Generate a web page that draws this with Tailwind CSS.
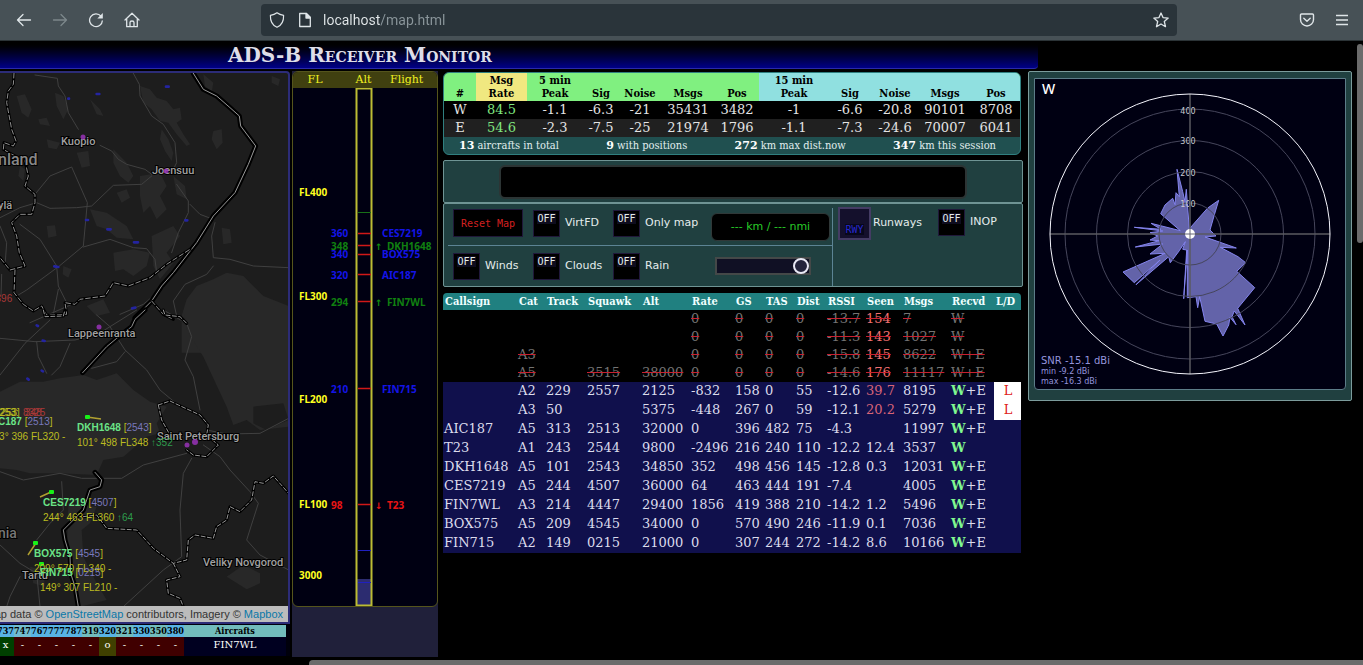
<!DOCTYPE html>
<html lang="en">
<head>
<meta charset="utf-8">
<title>ADS-B Receiver Monitor</title>
<script src="https://cdn.jsdelivr.net/npm/@tailwindcss/browser@4"></script>
</head>
<body class="bg-black text-white overflow-hidden font-['DejaVu_Serif',serif]">

<!-- Browser toolbar -->
<header class="relative flex items-center h-[41px] bg-[#475156] border-b border-[#2b3336] text-[#dfe5e8] font-['Roboto',sans-serif]">
  <nav class="flex items-center w-[261px] pl-4 gap-5 shrink-0">
    <button aria-label="Back" class="size-4"><svg viewBox="0 0 16 16" class="size-4" fill="none" stroke="currentColor" stroke-width="1.3" stroke-linecap="round" stroke-linejoin="round"><path d="M14.500 8H1.500M7 2.500L1.500 8L7 13.500"/></svg></button>
    <button aria-label="Forward" class="size-4 text-[#7d878b]"><svg viewBox="0 0 16 16" class="size-4" fill="none" stroke="currentColor" stroke-width="1.300" stroke-linecap="round" stroke-linejoin="round"><path d="M1.500 8H14.500M9 2.500L14.500 8L9 13.500"/></svg></button>
    <button aria-label="Reload" class="size-4"><svg viewBox="0 0 16 16" class="size-4" fill="none" stroke="currentColor" stroke-width="1.300"><path d="M13 4.200A6.400 6.400 0 1 0 14.400 8.500"/><path d="M14.800 1V6.500H9.300Z" fill="currentColor" stroke="none"/></svg></button>
    <button aria-label="Home" class="size-4"><svg viewBox="0 0 16 16" class="size-4" fill="none" stroke="currentColor" stroke-width="1.300" stroke-linejoin="round" stroke-linecap="round"><path d="M1 8L8 1.300L15 8M2.700 7V14.700H13.300V7M6 14.500V10.500Q6 9 8 9T10 10.500V14.500"/></svg></button>
  </nav>
  <div class="flex flex-1 items-center h-8 px-2 rounded bg-[#2a343a]">
    <svg viewBox="0 0 16 16" class="size-4 shrink-0" fill="none" stroke="currentColor" stroke-width="1.200" stroke-linejoin="round"><path d="M8 .8C10 2.300 12 3 14.600 3.400C14.800 9 13 13 8 15.300C3 13 1.200 9 1.400 3.400C4 3 6 2.300 8 .8Z"/></svg>
    <svg viewBox="0 0 16 16" class="size-4 ml-3 shrink-0" fill="none" stroke="currentColor" stroke-width="1.300" stroke-linejoin="round"><path d="M2.700 1.500H9.500L13.300 5.300V14.500H2.700Z"/><path d="M9 1.500V6H13.300Z" fill="currentColor"/></svg>
    <input aria-label="Address" value="localhost/map.html" class="flex-1 ml-[10px] text-sm outline-none bg-linear-[90deg,#e3e8ea_57px,#8b969b_57px] bg-clip-text text-transparent">
    <button aria-label="Bookmark" class="size-4"><svg viewBox="0 0 16 16" class="size-4" fill="none" stroke="currentColor" stroke-width="1.300" stroke-linejoin="round"><path d="M8 1L10 5.600L15.200 6.100L11.300 9.500L12.500 14.700L8 12L3.500 14.700L4.700 9.500L.8 6.100L6 5.600Z"/></svg></button>
  </div>
  <div class="flex items-center w-[186px] pr-[14px] gap-5 justify-end shrink-0">
    <button aria-label="Pocket" class="size-4"><svg viewBox="0 0 16 16" class="size-4" fill="none" stroke="currentColor" stroke-width="1.400" stroke-linecap="round" stroke-linejoin="round"><path d="M2.500 2H13.500Q14.500 2 14.500 3V7.500A6.500 6.500 0 0 1 1.500 7.500V3Q1.500 2 2.500 2ZM4.800 6.300L8 9.300L11.200 6.300"/></svg></button>
    <button aria-label="Menu" class="size-[14px]"><svg viewBox="0 0 14 14" class="size-[14px]" stroke="currentColor" stroke-width="1.400"><path d="M1 2.500H13M1 7H13M1 11.500H13"/></svg></button>
  </div>
  <div class="absolute right-0 top-11 w-[6px] h-[199px] rounded-full bg-[#6b6b6b]"></div>
</header>

<div class="mr-[325px] mb-[2px] h-7 pl-[228px] flex items-center rounded-br border-b border-[#2a2aa8] bg-linear-to-b from-black to-[#000088]">
  <h1 class="text-xl font-bold leading-7 text-[#dedee8] [font-variant:small-caps]">ADS-B Receiver Monitor</h1>
</div>

<main class="grid grid-cols-[290px_146px_minmax(0,1fr)_324px] pr-[11px] items-start">

  <!-- Map -->
  <section>
    <div class="relative h-[553px] rounded-tr border-y-2 border-r-2 border-[#2c2c78] bg-[#1d1d1d] overflow-hidden">
      <svg viewBox="0 73 288 550" width="288" height="550" class="block font-['Roboto',sans-serif]">
        <!-- upper half, drawn at three units per pixel -->
        <g transform="translate(0 66) scale(.33333)" fill="none" stroke-linejoin="round" stroke-linecap="round">
          <g fill="#282828">
            <path d="M420 60L450 70L470 95L500 105L520 130L540 125L545 160L530 170L550 205L570 235L560 240L530 205L505 170L480 165L455 130L430 110Z"/>
            <path d="M50 90L75 85L95 130L85 155L65 140ZM165 80L190 90L205 130L190 160L170 120ZM270 100L300 130L310 150L290 145ZM115 160L140 155L150 180L120 175Z"/>
            <path d="M485 190L505 220L520 260L515 285L495 255L480 220ZM640 195L665 190L668 230L650 250L635 220ZM340 250L380 290L400 330L385 350L360 330L340 290ZM230 260L265 255L270 300L245 305Z"/>
            <path d="M420 330L480 320L500 360L480 390L500 430L470 460L450 420L430 440L420 390ZM520 330L555 360L560 400L530 385ZM270 430L320 440L380 480L400 520L350 515L320 490L290 480ZM140 480L165 478L170 510L145 515Z"/>
            <path d="M340 560L400 550L450 560L440 600L400 630L370 610L345 615ZM455 510L520 480L540 510L500 560L520 590L480 640L460 600ZM665 485L690 490L695 530L670 535ZM190 600L215 610L205 635L188 625ZM350 380L380 370L390 395L365 410Z"/>
            <path d="M545 750L560 700L590 660L640 640L680 620L730 630L790 690L866 720V860H545ZM610 25L640 50L635 80L615 60ZM815 30L840 40L835 60L815 50ZM260 720L310 700L330 740L290 750ZM60 300L75 310L70 345L55 330ZM140 220L180 230L170 250L145 245Z"/>
          </g>
          <g stroke="#404040" stroke-width="3">
            <path d="M105 27L172 37L175 60L195 90L205 140L235 190M300 238L335 255L355 280L380 295L435 310L455 325M400 22L418 55L420 90L455 150L490 175L525 230L530 290L515 320M0 455L60 425L110 410L150 427L230 425L275 420L340 358L425 355L455 330M105 385L150 330L215 303L240 360L262 410L250 540L178 600L80 672L50 690M250 543L330 520L400 545L440 548L465 580L470 620M530 355L565 405L565 440L535 500L515 560M570 415L600 445L640 460M645 470L635 510L640 575L690 580L760 600L866 605M640 600L620 625L555 655L520 705L530 750M60 475L120 520L170 600L175 660L200 710L190 748M175 670L160 745M0 480L20 530L15 600M490 665L430 715L360 745M90 770L250 700M5 625L3 690"/>
          </g>
          <path d="M580 22L610 70L650 90L690 125L718 150L722 180L767 240L745 295L705 380L640 450L590 530L520 620L485 660L455 705L405 755" stroke="#000" stroke-width="15"/>
          <path d="M580 22L610 70L650 90L690 125L718 150L722 180L767 240L745 295L705 380L640 450L590 530L520 620L485 660L455 705L405 755" stroke="#999" stroke-width="3"/>
          <path d="M42 22L40 55L25 75L20 110L35 190L48 225L40 240L12 230L10 250L30 262L75 285L85 330L75 360L105 385L105 410L95 445L60 445L35 470L50 510L58 560L75 600L30 612L0 575M45 612L42 680L70 715L100 735L125 720L140 748L200 745L195 710L225 715L240 700L315 690L340 650L385 660L450 635L500 595L570 550M455 705L490 745L520 760" stroke="#000" stroke-width="9"/>
          <path d="M42 22L40 55L25 75L20 110L35 190L48 225L40 240L12 230L10 250L30 262L75 285L85 330L75 360L105 385L105 410L95 445L60 445L35 470L50 510L58 560L75 600L30 612L0 575M45 612L42 680L70 715L100 735L125 720L140 748L200 745L195 710L225 715L240 700L315 690L340 650L385 660L450 635L500 595L570 550M455 705L490 745L520 760" stroke="#909090" stroke-width="3" stroke-dasharray="14 8"/>
          <g stroke="#2424a0" stroke-width="8"><path d="M205 98l2 0M290 84l8 0M498 62l8 0M258 462l6 0M322 490l10 0M402 529l12 0M556 463l6 0M163 601l12 2M396 727l10-2"/></g>
        </g>
        <!-- lower half -->
        <g transform="translate(0 310) scale(.33333)" fill="none" stroke-linejoin="round" stroke-linecap="round">
          <g fill="#282828">
            <path d="M0 245L60 215L130 215L180 205L250 195L290 210L350 190L400 240L450 275L500 290L470 340L480 370L440 380L370 440L310 450L290 495L180 490L90 490L50 480L0 475Z"/>
            <path d="M550 0H866V350L780 360L740 330L700 345L680 290L610 140L560 60Z"/>
            <path d="M205 580L290 590L270 640L245 660L250 740L290 820L320 870L240 890L200 760ZM680 800L730 765L780 790L780 820L740 838ZM90 770L130 780L135 830L100 820Z"/>
          </g>
          <path d="M760 290L850 280L866 330L800 360L760 340Z" fill="#1d1d1d"/>
          <g stroke="#404040" stroke-width="3">
            <path d="M0 85L105 95L225 90L290 75L410 0M290 15L330 50L375 120L440 180L480 240L540 290M0 195L75 100L150 30M110 95L115 140L140 190M210 100L180 170L155 195M275 175L350 155L375 125M490 0L560 40L575 80L555 150L580 200L600 300M620 360L680 372L780 370L866 325M0 485L70 510L180 490L245 505L365 505L430 465L560 430M575 445L550 490L540 600L545 740L490 780L370 890M610 405L660 440L690 480L750 545L775 580L740 690L780 735L866 780M185 515L190 600L150 640L110 690M0 705L60 760L110 790L120 890M60 800L30 860L20 890"/>
          </g>
          <path d="M435 0L405 28L395 50L350 85L320 110L248 188M285 487L305 510L300 530L270 540L250 600L190 660L195 690L210 740L212 790L225 830L235 890" stroke="#000" stroke-width="15"/>
          <path d="M435 0L405 28L395 50L350 85L320 110L248 188M285 487L305 510L300 530L270 540L250 600L190 660L195 690L210 740L212 790L225 830L235 890" stroke="#909090" stroke-width="3"/>
          <path d="M130 0L135 20L190 18L195 0M490 0L495 15L540 20L560 40M475 285L510 273L535 285L600 315L625 345L620 375L655 405L620 440L580 435L560 420M475 285L485 330L510 375M250 620L290 615L320 655L410 660L460 715L520 760L560 750L565 690L585 675L640 685L650 650L680 630L690 590L720 605L755 570L765 515L790 520L820 498L866 550M520 760L540 800L500 810L505 850L540 865L550 890" stroke="#000" stroke-width="9"/>
          <path d="M130 0L135 20L190 18L195 0M490 0L495 15L540 20L560 40M475 285L510 273L535 285L600 315L625 345L620 375L655 405L620 440L580 435L560 420M475 285L485 330L510 375M250 620L290 615L320 655L410 660L460 715L520 760L560 750L565 690L585 675L640 685L650 650L680 630L690 590L720 605L755 570L765 515L790 520L820 498L866 550M520 760L540 800L500 810L505 850L540 865L550 890" stroke="#989898" stroke-width="3" stroke-dasharray="12 7"/>
          <g stroke="#2424a0" stroke-width="8"><path d="M110 46l4 2M128 92l6 1M125 182l4 2M82 206l4 3"/></g>
        </g>
        <g fill="#a0a0a0" stroke="#000" stroke-width="2" paint-order="stroke" font-size="11" font-weight="500">
          <text x="61" y="145">Kuopio</text><text x="152" y="174">Joensuu</text><text x="-2" y="209">ylä</text>
          <text x="68" y="337">Lappeenranta</text><text x="157" y="440">Saint Petersburg</text>
          <text x="203" y="566">Veliky Novgorod</text><text x="22" y="579">Tartu</text>
          <text x="-2" y="165" font-size="16" fill="#888">nland</text><text x="-2" y="538" font-size="14" fill="#777">nia</text>
        </g>
        <g fill="#9932b8" fill-opacity=".85"><circle cx="83" cy="137" r="2.500"/><circle cx="166" cy="171" r="2.500"/><circle cx="99" cy="327" r="2.500"/><circle cx="195" cy="442" r="3"/><circle cx="187" cy="445" r="2.500"/></g>
        <g stroke="#b0a030" stroke-width="1.500"><path d="M87 417L101 419M51 492L40 497M36 543L28 555"/></g>
        <g fill="#18f018"><rect x="85" y="415" width="5" height="4" rx="1"/><rect x="49" y="490" width="5" height="4" rx="1"/><rect x="33" y="541" width="5" height="4" rx="1"/><rect x="39" y="562" width="5" height="4" rx="1"/></g>
        <g class="font-['Liberation_Sans',sans-serif]" font-size="10" fill="#bcbc20">
          <text x="-10" y="302" fill="#a83838">5396</text>
          <text x="-12" y="416">81253:</text><text x="-8" y="416">[1253]</text><text x="25" y="416" fill="#a83838">348</text><text x="23" y="416" fill="#a83838">8325</text>
          <text x="-12" y="425"><tspan font-weight="700" fill="#6be487">AIC187</tspan> [<tspan fill="#7878bc">2513</tspan>]</text>
          <text x="-12" y="440">313° 396 FL320 -</text>
          <text x="77" y="431"><tspan font-weight="700" fill="#6be487">DKH1648</tspan> [<tspan fill="#7878bc">2543</tspan>]</text>
          <text x="77" y="446">101° 498 FL348 <tspan fill="#2d9c4c">↑352</tspan></text>
          <text x="43" y="506"><tspan font-weight="700" fill="#6be487">CES7219</tspan> [<tspan fill="#7878bc">4507</tspan>]</text>
          <text x="43" y="521">244° 463 FL360 <tspan fill="#2d9c4c">↑64</tspan></text>
          <text x="34" y="557"><tspan font-weight="700" fill="#6be487">BOX575</tspan> [<tspan fill="#7878bc">4545</tspan>]</text>
          <text x="34" y="572">209° 570 FL340 -</text>
          <text x="40" y="576"><tspan font-weight="700" fill="#6be487">FIN715</tspan> [<tspan fill="#7878bc">0215</tspan>]</text>
          <text x="40" y="591">149° 307 FL210 -</text>
        </g>
      </svg>
      <p class="absolute bottom-0 inset-x-0 h-4 pr-[5px] flex justify-end items-center whitespace-nowrap bg-[#bcbcbc] text-[11px] leading-4 text-[#333] font-['Liberation_Sans',sans-serif]"><span>Map data © <a href="#" class="text-[#0a78a8]">OpenStreetMap</a> contributors, Imagery © <a href="#" class="text-[#0a78a8]">Mapbox</a></span></p>
    </div>
    <div class="flex justify-end overflow-hidden pr-1 pt-px bg-[#00000c]">
      <table class="w-[289px] shrink-0 table-fixed border-collapse text-center text-[10px] [&_th]:p-0 [&_td]:p-0">
        <colgroup><col span="11" class="w-[17px]"><col></colgroup>
        <thead class="text-[9px] leading-3 text-black font-['DejaVu_Serif_Condensed','DejaVu_Serif',serif]"><tr class="h-3 bg-[#72bcbc]">
          <th class="bg-[#58b4e4]">737</th><th class="bg-[#72bcd0]">747</th><th class="bg-[#58b4e4]">767</th><th class="bg-[#58b4e4]">777</th><th class="bg-[#58b4e4]">787</th><th>319</th><th class="bg-[#58b4e4]">320</th><th>321</th><th class="bg-[#58b4e4]">330</th><th>350</th><th class="bg-[#58b4e4]">380</th><th>Aircrafts</th></tr></thead>
        <tbody class="align-top leading-[15px]"><tr class="h-[19px] bg-[#400000]">
          <td class="bg-[#004000]">x</td><td>-</td><td>-</td><td>-</td><td>-</td><td>-</td><td class="bg-[#404000]">o</td><td>-</td><td>-</td><td>-</td><td>-</td><td class="bg-[#000020]">FIN7WL</td></tr></tbody>
      </table>
    </div>
  </section>

  <!-- Altitude ladder -->
  <section class="ml-[2px] -mr-[2px] h-[586px] bg-[#20203a]">
    <div class="rounded-md border border-[#55551c] bg-[#000012] overflow-hidden">
      <div class="grid grid-cols-[44px_53px_1fr] h-4 bg-[#404010] text-[#f0f020] text-[11px] leading-4 text-center">
        <span>FL</span><span>Alt</span><span class="pr-6">Flight</span>
      </div>
      <svg viewBox="293 88 144 518" width="144" height="518" class="block font-['Noto_Sans',sans-serif]" font-size="10" font-weight="700">
        <rect x="357" y="579" width="15" height="27" fill="#2c2c70"/>
        <rect x="356.500" y="88.500" width="15" height="517" fill="none" stroke="#bcbc34" stroke-width="2"/>
        <path d="M358 233.500h13M358 245.500h13M358 254.500h13M358 274.500h13M358 301.500h13M358 388.500h13M358 504.500h13" stroke="#d01818" stroke-width="1.500"/>
        <path d="M358 212.500h13" stroke="#187018"/>
        <path d="M358 550.500h13M358 582.500h13" stroke="#2020c0"/>
        <g fill="#ffff20"><text x="299" y="196">FL400</text><text x="299" y="300">FL300</text><text x="299" y="403">FL200</text><text x="299" y="508">FL100</text><text x="299" y="579">3000</text></g>
        <g fill="#1414e8"><text x="331" y="237">360</text><text x="382" y="237">CES7219</text><text x="331" y="258">340</text><text x="382" y="258">BOX575</text><text x="331" y="279">320</text><text x="382" y="279">AIC187</text><text x="331" y="393">210</text><text x="382" y="393">FIN715</text></g>
        <g fill="#108010"><text x="331" y="250">348</text><text x="387" y="250">DKH1648</text><text x="331" y="306">294</text><text x="387" y="306">FIN7WL</text></g>
        <g fill="#e81414"><text x="331" y="509">98</text><text x="387" y="509">T23</text></g>
        <g class="font-['DejaVu_Sans',sans-serif]" font-size="9"><text x="375" y="250" fill="#109010">↑</text><text x="375" y="306" fill="#109010">↑</text><text x="375" y="509" fill="#e81414">↓</text></g>
      </svg>
    </div>
  </section>

  <!-- Statistics, controls and aircraft list -->
  <section class="ml-[7px] mr-[5px] pt-px">
    <div class="rounded-md border border-[#308080] bg-[#205050] overflow-hidden mr-[2px]">
      <table class="w-full table-fixed border-collapse text-center text-[13px] text-[#e4e4e4] [&_th]:p-0 [&_td]:p-0">
        <colgroup><col class="w-[32px]"><col class="w-[51px]"><col class="w-[56px]"><col class="w-[36px]"><col class="w-[42px]"><col class="w-[54px]"><col class="w-[44px]"><col class="w-[70px]"><col class="w-[42px]"><col class="w-[48px]"><col class="w-[52px]"><col class="w-[50px]"></colgroup>
        <thead class="text-[11px] leading-[13px] text-black align-bottom font-['DejaVu_Serif_Condensed','DejaVu_Serif',serif]"><tr class="h-7 bg-[#80f080] [&_th]:pb-px">
          <th>#</th><th class="bg-[#f0e880]">Msg<br>Rate</th><th>5 min<br>Peak</th><th>Sig</th><th>Noise</th><th>Msgs</th><th>Pos</th>
          <th class="bg-[#90e0e0]">15 min<br>Peak</th><th class="bg-[#90e0e0]">Sig</th><th class="bg-[#90e0e0]">Noise</th><th class="bg-[#90e0e0]">Msgs</th><th class="bg-[#90e0e0]">Pos</th></tr></thead>
        <tbody class="leading-[18px]">
          <tr class="bg-black"><td>W</td><td class="text-[#80e880]">84.5</td><td>-1.1</td><td>-6.3</td><td>-21</td><td>35431</td><td>3482</td><td>-1</td><td>-6.6</td><td>-20.8</td><td>90101</td><td>8708</td></tr>
          <tr class="bg-[#202020]"><td>E</td><td class="text-[#80e880]">54.6</td><td>-2.3</td><td>-7.5</td><td>-25</td><td>21974</td><td>1796</td><td>-1.1</td><td>-7.3</td><td>-24.6</td><td>70007</td><td>6041</td></tr>
        </tbody>
      </table>
      <div class="flex justify-between pl-[15px] pr-6 text-[11px] leading-[17px] text-[#e0eeee] font-['DejaVu_Serif_Condensed','DejaVu_Serif',serif] [&_b]:font-['DejaVu_Serif',serif] [&_b]:text-white">
        <span><b>13</b> aircrafts in total</span><span><b>9</b> with positions</span><span><b>272</b> km max dist.now</span><span><b>347</b> km this session</span>
      </div>
    </div>

    <div class="mt-[5px] h-[43px] flex items-center justify-center rounded-xs border border-[#6f9494] bg-[#204040]">
      <div class="w-[81%] h-[34px] rounded-md border-2 border-[#2c3434] bg-black"></div>
    </div>

    <div class="h-[84px] flex rounded-xs border border-[#6f9494] bg-[#204040] font-['DejaVu_Sans',sans-serif] text-[11px] text-[#e4ecec]">
      <div class="w-[385px] ml-1 mt-1 border-r border-[#5c8494] h-[78px]">
        <div class="flex h-[38px] pt-px pl-[5px] border-b border-[#5c8494]">
          <div class="w-20"><button class="w-[70px] h-7 bg-black border border-[#20183a] font-['DejaVu_Sans_Mono',monospace] text-[10px] text-[#d42020]">Reset Map</button></div>
          <label class="w-20 h-7 flex items-center gap-[5px]"><button class="size-[27px] pb-2 bg-black border border-[#20183a] font-['DejaVu_Sans_Mono',monospace] text-[10px] leading-3"><span class="bg-[#0e0c1e]">OFF</span></button>VirtFD</label>
          <label class="w-[98px] h-7 flex items-center gap-[5px]"><button class="size-[27px] pb-2 bg-black border border-[#20183a] font-['DejaVu_Sans_Mono',monospace] text-[10px] leading-3"><span class="bg-[#0e0c1e]">OFF</span></button>Only map</label>
          <output class="w-[119px] h-7 mt-1 rounded-md bg-black border border-[#303838] text-center leading-[26px] text-[#28cc28]">--- km / --- nmi</output>
        </div>
        <div class="flex items-center h-[38px] pt-[2px] pl-[5px]">
          <label class="w-20 h-7 flex items-center gap-[5px]"><button class="size-[27px] pb-2 bg-black border border-[#20183a] font-['DejaVu_Sans_Mono',monospace] text-[10px] leading-3"><span class="bg-[#0e0c1e]">OFF</span></button>Winds</label>
          <label class="w-20 h-7 flex items-center gap-[5px]"><button class="size-[27px] pb-2 bg-black border border-[#20183a] font-['DejaVu_Sans_Mono',monospace] text-[10px] leading-3"><span class="bg-[#0e0c1e]">OFF</span></button>Clouds</label>
          <label class="w-[102px] h-7 flex items-center gap-[5px]"><button class="size-[27px] pb-2 bg-black border border-[#20183a] font-['DejaVu_Sans_Mono',monospace] text-[10px] leading-3"><span class="bg-[#0e0c1e]">OFF</span></button>Rain</label>
          <input type="range" aria-label="Opacity" min="0" max="100" value="100" class="appearance-none w-24 h-[18px] border-2 border-[#444848] bg-[#101024] [&::-webkit-slider-thumb]:appearance-none [&::-webkit-slider-thumb]:size-4 [&::-webkit-slider-thumb]:rounded-full [&::-webkit-slider-thumb]:border-2 [&::-webkit-slider-thumb]:border-[#e8e8f4] [&::-webkit-slider-thumb]:bg-[#24243c]">
        </div>
      </div>
      <div class="flex items-start pt-[3px] pl-[5px]">
        <label class="w-[100px] flex items-center gap-[2px]"><button class="size-[33px] pt-3 bg-[#14102c] border-2 border-[#443c64] font-['DejaVu_Sans_Mono',monospace] text-[10px] leading-3 text-[#2828d0]"><span class="bg-[#08081c]">RWY</span></button>Runways</label>
        <label class="h-[31px] flex items-center gap-[5px]"><button class="size-[27px] pb-2 bg-black border border-[#20183a] font-['DejaVu_Sans_Mono',monospace] text-[10px] leading-3"><span class="bg-[#0e0c1e]">OFF</span></button>INOP</label>
      </div>
    </div>

    <div class="mt-[6px] mr-[2px] rounded-t overflow-hidden">
    <table class="w-full table-fixed border-collapse text-left text-[13px] leading-[18px] whitespace-nowrap text-[#dcdcec] [&_th]:p-0 [&_th]:pl-[2px] [&_td]:p-0 [&_td]:pl-px">
      <colgroup><col class="w-[74px]"><col class="w-[28px]"><col class="w-[41px]"><col class="w-[55px]"><col class="w-[49px]"><col class="w-[44px]"><col class="w-[30px]"><col class="w-[31px]"><col class="w-[31px]"><col class="w-[39px]"><col class="w-[37px]"><col class="w-[48px]"><col class="w-[44px]"><col class="w-[27px]"></colgroup>
      <thead class="text-[11px] leading-4 text-[#f0ffff] font-['DejaVu_Serif_Condensed','DejaVu_Serif',serif]"><tr class="h-[17px] bg-[#208080]"><th>Callsign</th><th>Cat</th><th>Track</th><th>Squawk</th><th>Alt</th><th>Rate</th><th>GS</th><th>TAS</th><th>Dist</th><th>RSSI</th><th>Seen</th><th>Msgs</th><th>Recvd</th><th>L/D</th></tr></thead>
      <tbody class="bg-black text-[#747474] [&_td]:line-through [&_td]:decoration-[#c82030]">
        <tr><td></td><td></td><td></td><td></td><td></td><td>0</td><td>0</td><td>0</td><td>0</td><td>-13.7</td><td class="text-[#f07070]">154</td><td>7</td><td>W</td><td></td></tr>
        <tr><td></td><td></td><td></td><td></td><td></td><td>0</td><td>0</td><td>0</td><td>0</td><td>-11.3</td><td class="text-[#f07070]">143</td><td>1027</td><td>W</td><td></td></tr>
        <tr><td></td><td>A3</td><td></td><td></td><td></td><td>0</td><td>0</td><td>0</td><td>0</td><td>-15.8</td><td class="text-[#f07070]">145</td><td>8622</td><td>W+E</td><td></td></tr>
        <tr><td></td><td>A5</td><td></td><td>3515</td><td>38000</td><td>0</td><td>0</td><td>0</td><td>0</td><td>-14.6</td><td class="text-[#f07070]">176</td><td>11117</td><td>W+E</td><td></td></tr>
      </tbody>
      <tbody class="bg-[#10104c] [&_tr]:h-[19px] [&_tr]:align-top [&_b]:text-[#80f890]">
        <tr><td></td><td>A2</td><td>229</td><td>2557</td><td>2125</td><td>-832</td><td>158</td><td>0</td><td>55</td><td>-12.6</td><td class="text-[#d86478]">39.7</td><td>8195</td><td><b>W</b>+E</td><td class="bg-white text-center text-[#e02020]">L</td></tr>
        <tr><td></td><td>A3</td><td>50</td><td></td><td>5375</td><td>-448</td><td>267</td><td>0</td><td>59</td><td>-12.1</td><td class="text-[#d86478]">20.2</td><td>5279</td><td><b>W</b>+E</td><td class="bg-white text-center text-[#e02020]">L</td></tr>
        <tr><td>AIC187</td><td>A5</td><td>313</td><td>2513</td><td>32000</td><td>0</td><td>396</td><td>482</td><td>75</td><td>-4.3</td><td></td><td>11997</td><td><b>W</b>+E</td><td></td></tr>
        <tr><td>T23</td><td>A1</td><td>243</td><td>2544</td><td>9800</td><td>-2496</td><td>216</td><td>240</td><td>110</td><td>-12.2</td><td>12.4</td><td>3537</td><td><b>W</b></td><td></td></tr>
        <tr><td>DKH1648</td><td>A5</td><td>101</td><td>2543</td><td>34850</td><td>352</td><td>498</td><td>456</td><td>145</td><td>-12.8</td><td>0.3</td><td>12031</td><td><b>W</b>+E</td><td></td></tr>
        <tr><td>CES7219</td><td>A5</td><td>244</td><td>4507</td><td>36000</td><td>64</td><td>463</td><td>444</td><td>191</td><td>-7.4</td><td></td><td>4005</td><td><b>W</b>+E</td><td></td></tr>
        <tr><td>FIN7WL</td><td>A3</td><td>214</td><td>4447</td><td>29400</td><td>1856</td><td>419</td><td>388</td><td>210</td><td>-14.2</td><td>1.2</td><td>5496</td><td><b>W</b>+E</td><td></td></tr>
        <tr><td>BOX575</td><td>A5</td><td>209</td><td>4545</td><td>34000</td><td>0</td><td>570</td><td>490</td><td>246</td><td>-11.9</td><td>0.1</td><td>7036</td><td><b>W</b>+E</td><td></td></tr>
        <tr><td>FIN715</td><td>A2</td><td>149</td><td>0215</td><td>21000</td><td>0</td><td>307</td><td>244</td><td>272</td><td>-14.2</td><td>8.6</td><td>10166</td><td><b>W</b>+E</td><td></td></tr>
      </tbody>
    </table>
    </div>
  </section>

  <!-- Range plot -->
  <section class="rounded-xs border border-[#7c9c9c] bg-[#204040] px-[5px] pt-[6px] pb-[10px]">
    <div class="rounded-b border border-[#5c7c88] bg-[#000012] overflow-hidden">
      <svg viewBox="1035 79 310 310" class="block w-full font-['DejaVu_Sans',sans-serif]">
        <path d="M1186.300 189.300L1189.300 229L1192.700 225L1207.700 208L1218.700 200.300L1214.300 215L1210 230L1211 231L1216 236L1205 237L1236.300 248L1220.300 247.300L1238 256.700L1245.700 262.700L1236.700 271.300L1254.700 287.700L1237.700 308.300L1245 325L1234.300 311L1232 316.700L1236 324.700L1230 317.300L1228.700 325L1223 336L1216.700 324L1205 321.300L1199.700 296.700L1197.700 307.700L1196 296.700L1187.300 297.700V250L1183.700 298.700L1186.700 250L1182.700 249.300L1185.300 241.700L1179.300 250.700L1170.300 262.700L1168.700 256.700L1136 284.700L1160 260L1134.300 282.700L1123 272L1165.300 253.300L1150 254L1162.700 244L1135.300 247L1159.300 240.700L1150 240L1157.700 236L1150 232.700L1162.700 231L1134.300 227.300L1161 229.300L1151 223.300L1180.300 230.700L1160.700 213.700L1165 205L1172.700 198.300L1175 204.700L1176 192.700L1179.300 196.700L1177 169.300L1182.700 191.700L1185 201.700Z" fill="#7474c4" fill-opacity=".85" stroke="#8484ee"/>
        <g fill="none" stroke="#46465c"><circle cx="1190" cy="234" r="31"/><circle cx="1190" cy="234" r="62.500"/><circle cx="1190" cy="234" r="93.500"/><circle cx="1190" cy="234" r="125"/></g>
        <g fill="#c8c8d0" font-size="8" text-anchor="middle"><text x="1188" y="114">400</text><text x="1188" y="144">300</text><text x="1188" y="176">200</text><text x="1188" y="207">100</text></g>
        <path d="M1050 234H1330M1190 94V374" stroke="#5a5a60" stroke-width="1.500"/>
        <circle cx="1190" cy="234" r="140" fill="none" stroke="#f4f4fc"/>
        <circle cx="1190" cy="234" r="5" fill="#fff"/><path d="M1185 234H1195M1190 229V239" stroke="#667"/>
        <text x="1042" y="94" font-size="14" font-weight="500" fill="#fff" class="font-['Noto_Sans',sans-serif]">W</text>
        <g fill="#9494dc"><text x="1041" y="364" font-size="10">SNR -15.1 dBi</text><text x="1041" y="374" font-size="8">min -9.2 dBi</text><text x="1041" y="384" font-size="8">max -16.3 dBi</text></g>
      </svg>
    </div>
  </section>
</main>

<div class="pt-[3px] pl-[309px]"><div class="h-[5px] rounded-tl bg-[#6b6b6b]"></div></div>
</body>
</html>
